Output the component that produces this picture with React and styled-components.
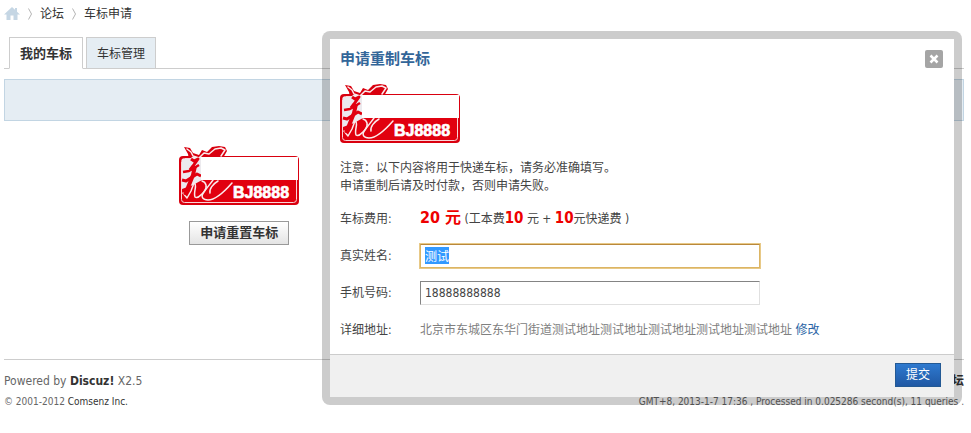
import React, { useEffect, useRef } from 'react';
import styled, { createGlobalStyle } from 'styled-components';

const GlobalStyle = createGlobalStyle`
  * {
    box-sizing: border-box;
  }

  body {
    margin: 0;
    background: #fff;
    color: #444;
    font: 12px/18px 'DejaVu Sans Condensed', 'Noto Sans CJK SC', sans-serif;
  }

  a {
    color: #333;
    text-decoration: none;
  }

  ::selection {
    background: #39f;
    color: #fff;
  }
`;

const Page = styled.div`
  padding: 5px 7px 0 4px;
`;

const Crumbs = styled.nav`
  display: flex;
  align-items: center;
  height: 18px;
`;

const HomeLink = styled.a`
  display: flex;
`;

const Chevron = styled.svg`
  margin: 0 5px;
`;

const Tabs = styled.div`
  display: flex;
  gap: 3px;
  margin-top: 14px;
  padding-left: 5px;
  border-bottom: 1px solid #cdcdcd;
`;

const Tab = styled.a`
  margin-bottom: -1px;
  padding: 2px 10px 0;
  border: 1px solid #cdcdcd;
  border-bottom-color: ${props => (props.$active ? '#fff' : '#cdcdcd')};
  line-height: 28px;
  font-size: ${props => (props.$active ? '13px' : '12px')};
  font-weight: ${props => (props.$active ? 'bold' : 'normal')};
  background: ${props => (props.$active ? '#fff' : '#e5edf3')};
`;

const Banner = styled.div`
  height: 42px;
  margin-top: 10px;
  border: 1px solid #c2d5e3;
  background: #e5edf3;
`;

const Content = styled.main`
  min-height: 238px;
  padding-top: 25px;
`;

const Emblem = styled.div`
  display: flex;
  flex-direction: column;
  align-items: center;
  gap: 15px;
  width: 49%;
`;

const Logo = styled.svg`
  display: block;
`;

const GreyButton = styled.button`
  height: 24px;
  padding: 0 10px;
  border: 1px solid #999;
  background: linear-gradient(#fff, #e4e4e4);
  color: #333;
  font: bold 13px/20px 'DejaVu Sans Condensed', 'Noto Sans CJK SC', sans-serif;
`;

const Footer = styled.footer`
  display: flex;
  justify-content: space-between;
  padding-top: 11px;
  border-top: 1px solid #cdcdcd;
  color: #666;
`;

const FooterColumn = styled.div`
  text-align: ${props => (props.$right ? 'right' : 'left')};
`;

const FooterLine = styled.p`
  margin: 0;
  line-height: 20px;
`;

const Small = styled(FooterLine)`
  line-height: 22px;
  font-size: 10px;
`;

const Dialog = styled.section`
  position: absolute;
  top: 31px;
  right: 9px;
  width: 640px;
  border: 8px solid rgba(0, 0, 0, .2);
  border-radius: 8px;
  background: #fff;
  background-clip: padding-box;
`;

const DialogHeader = styled.header`
  display: flex;
  justify-content: space-between;
  align-items: center;
  padding: 10px 11px 0 10px;
`;

const Title = styled.h3`
  margin: 0;
  line-height: 20px;
  font-size: 15px;
  color: #369;
`;

const CloseButton = styled.button`
  display: flex;
  padding: 0;
  border: none;
  background: none;
`;

const DialogBody = styled.form`
  padding: 15px 10px 0;
`;

const Notice = styled.p`
  margin: 15px 0 5px;
`;

const Row = styled.div`
  display: flex;
  align-items: center;
  height: 37px;
`;

const Label = styled.label`
  width: 80px;
`;

const Fee = styled.strong`
  color: #e00;
  font-size: ${props => (props.$large ? '16px' : '15px')};
`;

const TextInput = styled.input`
  width: 340px;
  height: 24px;
  padding: 0 4px;
  border: 1px solid;
  border-color: #848484 #e0e0e0 #e0e0e0 #848484;
  background: #fff;
  color: #444;
  font: inherit;

  &:focus {
    border-color: #b9883c #dcb564 #dcb564;
    outline: 1px solid #e8c987;
  }
`;

const Address = styled.span`
  color: #808080;

  a {
    color: #2b65a5;
  }
`;

const DialogFooter = styled.div`
  display: flex;
  justify-content: flex-end;
  margin: 6px -10px 0;
  padding: 8px 13px 10px;
  border-top: 1px solid #ccc;
  background: #f0f0f0;
`;

const SubmitButton = styled.button`
  height: 24px;
  padding: 0 10px;
  border: 1px solid #235994;
  background: linear-gradient(#2e79cf, #2058a4);
  color: #fff;
  font: 12px/20px 'DejaVu Sans Condensed', 'Noto Sans CJK SC', sans-serif;
`;

const Separator = () =>
  (<Chevron width="10" height="12" viewBox="0 0 10 12" fill="none" stroke="#b5b5b5">
    <path d="M3.5 .5l3 5.5l-3 5.5" />
  </Chevron>);

const PlateLogo = () =>
  (<Logo width="120" height="60" viewBox="0 0 120 60" role="img" aria-label="BJ8888">
    <path d="M5 1L11 2L14 7L20 9L23 4L28 6L33 1L40 0L46 1L48 5L44 12L10 14L9 8z" fill="#d9000f" />
    <rect y="10" width="120" height="49" rx="4" fill="#d9000f" />
    <rect x="2.500" y="12.500" width="115" height="44" rx="3" fill="#e1000f" stroke="#f9d5d8" />
    <path d="M3 13h8l2-2h10v23l-9 5L3 43z" fill="#eceaee" />
    <g fill="none" stroke="#fbeaec" strokeWidth="1.500" strokeLinecap="round" strokeLinejoin="round">
      <path d="M8 3L12 6L14 10L20 12L25 7L30 8L36 3L42 2L46 4L42 10" />
      <path d="M4 47L8 52L12 45L15 37C19 38 14 46 16 51C20 54 27 43 34 34" />
      <path d="M23 35C27 36 29 41 25 46C21 51 24 54 29 54C37 54 46 45 53 37" />
      <path d="M39 35C34 38 30 43 31 47" />
    </g>
    <g fill="none" stroke="#e1000f" strokeLinejoin="round">
      <path d="M12 13L15 15L19 13L14 20L11 24" strokeWidth="3" />
      <path d="M4 26L10 25L20 19" strokeWidth="2.500" />
      <path d="M16 20L14 29L10 39L6 49" strokeWidth="4" />
      <path d="M3 34L7 35L18 28L22 30" strokeWidth="3" />
    </g>
    <path d="M22 11h97v23H22z" fill="#fff" />
    <text
      x="54"
      y="52"
      fill="#fff"
      stroke="#fff"
      strokeWidth=".7"
      fontFamily="Liberation Sans, sans-serif"
      fontSize="16"
      fontWeight="bold"
    >
      BJ8888
    </text>
  </Logo>);

export default () => {
  const nameInput = useRef(null);

  useEffect(() => {
    nameInput.current.focus();
    nameInput.current.select();
  }, []);

  return (
    <>
      <GlobalStyle />
      <Page>
        <Crumbs>
          <HomeLink href="#" aria-label="首页">
            <svg width="16" height="14" viewBox="0 0 16 14" fill="#c5d6e4">
              <path d="M8 0L0 7.500h2.500V13h4V8.500h3V13h4V7.500H16L13 4.700V1h-2v1.800z" />
            </svg>
          </HomeLink>
          <Separator />
          <a href="#">论坛</a>
          <Separator />
          <a href="#">车标申请</a>
        </Crumbs>
        <Tabs>
          <Tab href="#" $active>我的车标</Tab>
          <Tab href="#">车标管理</Tab>
        </Tabs>
        <Banner />
        <Content>
          <Emblem>
            <PlateLogo />
            <GreyButton type="button">申请重置车标</GreyButton>
          </Emblem>
        </Content>
        <Footer>
          <FooterColumn>
            <FooterLine>Powered by <a href="#"><b>Discuz!</b></a> X2.5</FooterLine>
            <Small>© 2001-2012 <a href="#">Comsenz Inc.</a></Small>
          </FooterColumn>
          <FooterColumn $right>
            <FooterLine><a href="#"><b>论坛</b></a></FooterLine>
            <Small>GMT+8, 2013-1-7 17:36 , Processed in 0.025286 second(s), 11 queries .</Small>
          </FooterColumn>
        </Footer>
      </Page>
      <Dialog role="dialog" aria-labelledby="dialog-title">
        <DialogHeader>
          <Title id="dialog-title">申请重制车标</Title>
          <CloseButton type="button" aria-label="关闭">
            <svg width="18" height="18" viewBox="0 0 18 18">
              <rect width="18" height="18" rx="2" fill="#a5a5a5" />
              <path d="M5.500 5.500l7 7m0-7l-7 7" stroke="#fff" strokeWidth="2.500" />
            </svg>
          </CloseButton>
        </DialogHeader>
        <DialogBody>
          <PlateLogo />
          <Notice>
            注意：以下内容将用于快递车标，请务必准确填写。<br />
            申请重制后请及时付款，否则申请失败。
          </Notice>
          <Row>
            <Label as="span">车标费用:</Label>
            <span>
              <Fee $large>20 元</Fee> (工本费<Fee>10</Fee> 元 + <Fee>10</Fee>元快递费 )
            </span>
          </Row>
          <Row>
            <Label htmlFor="name">真实姓名:</Label>
            <TextInput id="name" ref={nameInput} defaultValue="测试" />
          </Row>
          <Row>
            <Label htmlFor="phone">手机号码:</Label>
            <TextInput id="phone" type="tel" defaultValue="18888888888" />
          </Row>
          <Row>
            <Label as="span">详细地址:</Label>
            <Address>
              北京市东城区东华门街道测试地址测试地址测试地址测试地址测试地址 <a href="#">修改</a>
            </Address>
          </Row>
          <DialogFooter>
            <SubmitButton type="submit">提交</SubmitButton>
          </DialogFooter>
        </DialogBody>
      </Dialog>
    </>
  );
};
